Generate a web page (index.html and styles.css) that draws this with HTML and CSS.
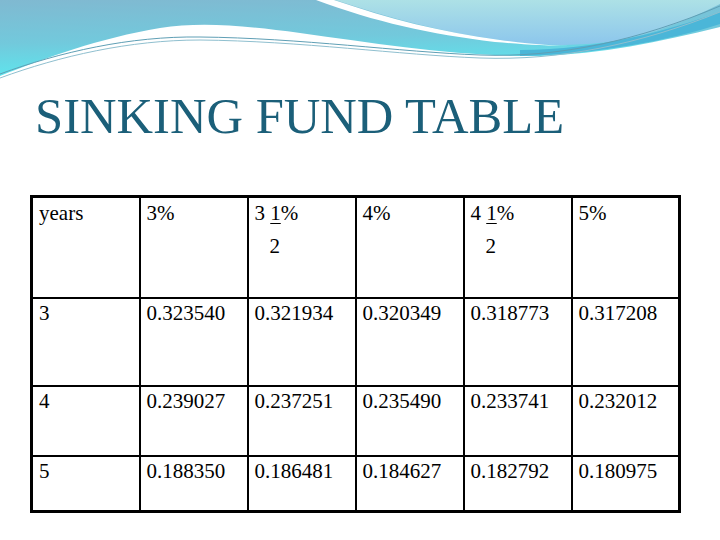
FILE: index.html
```html
<!DOCTYPE html>
<html>
<head>
<meta charset="utf-8">
<link rel="stylesheet" href="styles.css">
</head>
<body>
<div class="slide">
  <svg class="wave" viewBox="0 0 720 80" width="720" height="80" xmlns="http://www.w3.org/2000/svg">
    <defs>
      <linearGradient id="gMain" x1="0" y1="0" x2="0.2" y2="1">
        <stop offset="0" stop-color="#80b9d1"/>
        <stop offset="0.55" stop-color="#72c9dc"/>
        <stop offset="1" stop-color="#5de6ee"/>
      </linearGradient>
      <linearGradient id="gLight" x1="0" y1="0" x2="0" y2="1">
        <stop offset="0" stop-color="#ade1e6"/>
        <stop offset="1" stop-color="#8cc6ec"/>
      </linearGradient>
    </defs>
    <path d="M0,0 H720 V27 C660,42 600,54 540,56 C460,57 380,44 300,33 C240,25 200,22 160,28 C100,38 45,58 0,76 Z" fill="url(#gMain)"/>
    <path d="M335,0 C390,18 440,32 500,40 C540,46 580,47 620,40 C665,31 700,14 720,4 V0 Z" fill="url(#gLight)"/>
    <path d="M316,0 L334,0 C390,19 440,32 500,40 C530,44 555,46 575,46 C545,46 520,44 495,42 C430,34 375,22 316,0 Z" fill="#ffffff"/>
    <path d="M520,50 C600,50 670,30 720,12 V24 C670,40 600,54 520,56 Z" fill="#4bb6d8"/>
    <path d="M0,74 C60,52 130,36 200,37 C300,38 400,52 480,55 C560,58 640,40 720,6" fill="none" stroke="#5f9fb5" stroke-width="1"/>
    <path d="M0,78 C60,56 130,40 200,40 C300,41 400,55 480,58 C560,61 640,44 720,12" fill="none" stroke="#8fbfcf" stroke-width="1"/>
  </svg>
  <h1 class="title">SINKING FUND TABLE</h1>
  <table class="fund">
    <tr class="r-head">
      <td>years</td>
      <td>3%</td>
      <td><span class="frac">3 <u>1</u>%</span><span class="den">2</span></td>
      <td>4%</td>
      <td><span class="frac">4 <u>1</u>%</span><span class="den">2</span></td>
      <td>5%</td>
    </tr>
    <tr class="r-3">
      <td>3</td><td>0.323540</td><td>0.321934</td><td>0.320349</td><td>0.318773</td><td>0.317208</td>
    </tr>
    <tr class="r-4">
      <td>4</td><td>0.239027</td><td>0.237251</td><td>0.235490</td><td>0.233741</td><td>0.232012</td>
    </tr>
    <tr class="r-5">
      <td>5</td><td>0.188350</td><td>0.186481</td><td>0.184627</td><td>0.182792</td><td>0.180975</td>
    </tr>
  </table>
</div>
</body>
</html>
```

FILE: styles.css
```css
html, body {
  margin: 0;
  padding: 0;
  background: #ffffff;
}
.slide {
  width: 720px;
  height: 540px;
  overflow: hidden;
  position: relative;
  background: #ffffff;
}
.wave {
  display: block;
}
.title {
  margin: 11px 0 0 35px;
  font-family: "Liberation Serif", "Times New Roman", serif;
  font-weight: normal;
  font-size: 50.6px;
  line-height: 50px;
  height: 50px;
  color: #1b5f79;
  letter-spacing: 0;
  white-space: nowrap;
}
.fund {
  margin: 54px 0 0 30px;
  border-collapse: collapse;
  border: 3px solid #000;
  font-family: "Liberation Serif", "Times New Roman", serif;
  font-size: 21px;
  color: #000;
  table-layout: fixed;
  width: 650px;
}
.fund td {
  border: 2px solid #000;
  vertical-align: top;
  padding: 2px 6px 0 6px;
  width: 108px;
  box-sizing: border-box;
  line-height: 24px;
  white-space: nowrap;
}
.r-head td { height: 101px; padding-top: 3px; }
.r-3 td { height: 88px; }
.r-4 td { height: 70px; }
.r-5 td { height: 56px; }
.frac { display: block; }
.frac u { text-decoration-thickness: 1px; text-underline-offset: 3px; }
.den {
  display: block;
  margin-top: 9px;
  padding-left: 15px;
}
```
